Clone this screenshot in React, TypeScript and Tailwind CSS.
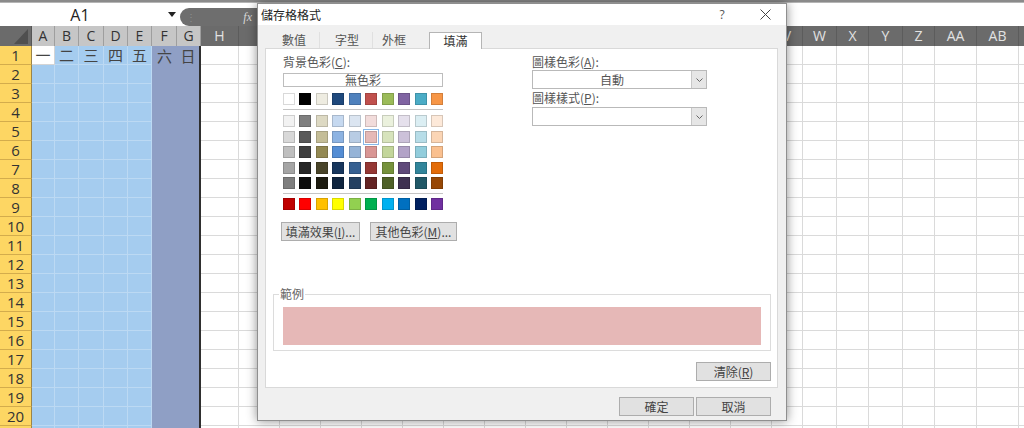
import React from "react";

type Col = { label: string; w: number };

// columns I..U sit under the dialog, so their headers are left blank
const COLS: Col[] = [
  { label: "A", w: 23 },
  { label: "B", w: 24 },
  { label: "C", w: 25 },
  { label: "D", w: 24 },
  { label: "E", w: 24 },
  { label: "F", w: 25 },
  { label: "G", w: 24 },
  { label: "H", w: 38 },
  ...Array.from({ length: 13 }, () => ({ label: "", w: 41 })),
  { label: "V", w: 31 },
  { label: "W", w: 34 },
  { label: "X", w: 32 },
  { label: "Y", w: 34 },
  { label: "Z", w: 32 },
  { label: "AA", w: 42 },
  { label: "AB", w: 42 },
  { label: "", w: 40 },
];

const WEEK = ["一", "二", "三", "四", "五", "六", "日"];

const THEME = ["#FFFFFF", "#000000", "#EEECE1", "#1F497D", "#4F81BD", "#C0504D", "#9BBB59", "#8064A2", "#4BACC6", "#F79646"];
const TINTS = [
  ["#F2F2F2", "#7F7F7F", "#DDD9C3", "#C6D9F0", "#DBE5F1", "#F2DCDB", "#EBF1DD", "#E5E0EC", "#DBEEF3", "#FDE9D9"],
  ["#D8D8D8", "#595959", "#C4BD97", "#8DB3E2", "#B8CCE4", "#E5B9B7", "#D7E3BC", "#CCC1D9", "#B7DDE8", "#FBD5B5"],
  ["#BFBFBF", "#3F3F3F", "#938953", "#548DD4", "#95B3D7", "#D99694", "#C3D69B", "#B2A2C7", "#92CDDC", "#FAC08F"],
  ["#A5A5A5", "#262626", "#494429", "#17365D", "#366092", "#953734", "#76923C", "#5F497A", "#31859B", "#E36C09"],
  ["#7F7F7F", "#0C0C0C", "#1D1B10", "#0F243E", "#244061", "#632423", "#4F6128", "#3F3151", "#205867", "#974806"],
];
const STANDARD = ["#C00000", "#FF0000", "#FFC000", "#FFFF00", "#92D050", "#00B050", "#00B0F0", "#0070C0", "#002060", "#7030A0"];

const cjk = "font-['Noto_Sans_CJK_TC','Noto_Sans',sans-serif]";
const latin = "font-['Open_Sans','Noto_Sans',sans-serif]";

function cellClass(row: number, col: number) {
  if (row === 1 && col === 0) return "bg-white border-r border-b border-[#d4d4d4]";
  if (col < 5) return "bg-[#a5ccef] border-r border-b border-[#bcd9f3]";
  if (col === 5) return "bg-[#8f9fc5]";
  if (col === 6) return "bg-[#8f9fc5] border-r-2 border-[#2f2f2f]";
  return "bg-white border-r border-b border-[#dadada]";
}

function Swatch({ color, selected }: { color: string; selected?: boolean }) {
  return (
    <div
      className={`w-[12px] h-[12px] border border-black/15 ${selected ? "outline outline-1 outline-offset-1 outline-[#86b8ea]" : ""}`}
      style={{ backgroundColor: color }}
    />
  );
}

function SwatchRow({ colors, selectedIndex }: { colors: string[]; selectedIndex?: number }) {
  return (
    <div className="flex justify-between w-[160px]">
      {colors.map((c, i) => (
        <Swatch key={i} color={c} selected={i === selectedIndex} />
      ))}
    </div>
  );
}

function Btn({ children, className = "" }: { children: React.ReactNode; className?: string }) {
  return (
    <div
      className={`h-[19px] flex items-center justify-center bg-[#e1e1e1] border border-[#adadad] text-[12px] leading-[14px] text-[#444] ${className}`}
    >
      {children}
    </div>
  );
}

function Select({ value }: { value?: string }) {
  return (
    <div className="w-[175px] h-[19px] flex bg-white border border-[#b9b9b9]">
      <div className="flex-1 flex items-center justify-center text-[12px] leading-[14px] text-[#555]">{value}</div>
      <div className="w-[15px] bg-[#e6e6e6] border-l border-[#c8c8c8] flex items-center justify-center">
        <svg width="7" height="4" viewBox="0 0 7 4">
          <polyline points="0.5,0.5 3.5,3.5 6.5,0.5" fill="none" stroke="#666" strokeWidth="1" />
        </svg>
      </div>
    </div>
  );
}

function Dialog() {
  return (
    <div
      className={`absolute left-[257px] top-[3px] w-[530px] h-[418px] bg-[#f0f0f0] border border-[#8f8f8f] shadow-[0_0_10px_rgba(0,0,0,0.45)] flex flex-col ${cjk}`}
    >
      {/* title bar */}
      <div className="h-[21px] bg-white flex items-center pl-[3px] pr-[15px]">
        <span className="text-[12px] leading-[14px] text-[#222]">儲存格格式</span>
        <span className={`ml-auto w-[12px] text-center text-[12px] leading-[14px] text-[#555] ${latin}`}>?</span>
        <svg className="ml-[32px]" width="11" height="11" viewBox="0 0 11 11">
          <path d="M0.5 0.5 L10.5 10.5 M10.5 0.5 L0.5 10.5" stroke="#444" strokeWidth="1" />
        </svg>
      </div>

      {/* tabs */}
      <div className="mt-[7px] ml-[5px] flex h-[16px] relative z-10 text-[12px] leading-[14px] text-[#555]">
        <div className="w-[57px] pl-[19px] flex items-center border-r border-[#e0e0e0]">數值</div>
        <div className="w-[53px] pl-[15px] flex items-center border-r border-[#e0e0e0]">字型</div>
        <div className="w-[55px] pl-[9px] flex items-center">外框</div>
        <div className="ml-[1px] w-[53px] h-[17px] flex items-center justify-center bg-white border border-b-0 border-[#b5b5b5] text-[#333]">
          填滿
        </div>
      </div>

      {/* panel */}
      <div className="ml-[7px] w-[513px] h-[340px] bg-white border border-[#d9d9d9] flex flex-col">
        <div className="flex pl-[17px] pt-[6px]">
          {/* left column */}
          <div className="w-[249px] flex flex-col text-[12px] leading-[14px] text-[#555]">
            <div>
              背景色彩(<span className="underline">C</span>):
            </div>
            <div className="mt-[4px] w-[160px] h-[14px] border border-[#bdbdbd] flex items-center justify-center text-[12px] text-[#555] leading-none">
              無色彩
            </div>
            <div className="mt-[6px]">
              <SwatchRow colors={THEME} />
            </div>
            <div className="mt-[4px] w-[160px] h-px bg-[#c4c4c4]" />
            <div className="mt-[5px] flex flex-col gap-[3.5px]">
              {TINTS.map((row, i) => (
                <SwatchRow key={i} colors={row} selectedIndex={i === 1 ? 5 : undefined} />
              ))}
            </div>
            <div className="mt-[4px] w-[160px] h-px bg-[#c4c4c4]" />
            <div className="mt-[4px]">
              <SwatchRow colors={STANDARD} />
            </div>
            <div className="mt-[12px] -ml-[2px] flex">
              <Btn className="w-[79px]">
                填滿效果(<span className="underline">I</span>)...
              </Btn>
              <Btn className="ml-[10px] w-[87px]">
                其他色彩(<span className="underline">M</span>)...
              </Btn>
            </div>
          </div>

          {/* right column */}
          <div className="flex flex-col text-[12px] leading-[14px] text-[#555]">
            <div>
              圖樣色彩(<span className="underline">A</span>):
            </div>
            <div className="mt-[1px]">
              <Select value="自動" />
            </div>
            <div className="mt-[2px]">
              圖樣樣式(<span className="underline">P</span>):
            </div>
            <div className="mt-[2px]">
              <Select />
            </div>
          </div>
        </div>

        {/* sample group */}
        <div className="mt-[53px] ml-[7px] w-[498px] h-[57px] border border-[#dcdcdc] relative pl-[9px] pt-[12px]">
          <span className="absolute -top-[8px] left-[5px] bg-white px-[1px] text-[12px] leading-[14px] text-[#666]">
            範例
          </span>
          <div className="w-[478px] h-[38px] bg-[#e6b8b7]" />
        </div>

        <div className="mt-[11px] flex justify-end pr-[6px]">
          <Btn className="w-[75px]">
            清除(<span className="underline">R</span>)
          </Btn>
        </div>
      </div>

      {/* footer */}
      <div className="mt-[9px] flex justify-end pr-[15px] gap-[2px]">
        <Btn className="w-[75px] border-[#0078d7]">確定</Btn>
        <Btn className="w-[75px]">取消</Btn>
      </div>
    </div>
  );
}

export default function App() {
  const rows = Array.from({ length: 21 }, (_, i) => i + 1);
  return (
    <div className="w-[1024px] h-[428px] overflow-hidden relative bg-white">
      {/* ribbon edge */}
      <div className="h-[3px] bg-[#8a8a8a] border-b border-[#b5b5b5]" />

      {/* name box + formula bar */}
      <div className="h-[23px] flex bg-white">
        <div className="w-[180px] shrink-0 flex items-center">
          <span className={`w-[160px] text-center text-[16px] leading-[20px] text-[#222] ${latin}`}>A1</span>
          <svg className="ml-[8px]" width="8" height="5" viewBox="0 0 8 5">
            <polygon points="0,0 8,0 4,5" fill="#222" />
          </svg>
        </div>
        <div className="w-[78px] h-[18px] self-end rounded-l-full bg-[#6e6e6e] flex items-center pl-[6px] pr-[6px]">
          <span className="text-[10px] text-[#8d8d8d] leading-none">⋮</span>
          <span className="ml-auto text-[12px] leading-[14px] italic text-[#d8d8d8] font-['Liberation_Serif',serif]">fx</span>
        </div>
      </div>

      {/* column headers */}
      <div className={`flex h-[20px] ${latin}`}>
        <div className="w-[32px] shrink-0 bg-[#6b6b6b] border-r border-[#555]">
          <svg width="31" height="20" viewBox="0 0 31 20">
            <polygon points="28,3 28,18 14,18" fill="#4f4f4f" />
          </svg>
        </div>
        {COLS.map((c, i) => (
          <div
            key={i}
            style={{ width: c.w }}
            className={`shrink-0 flex items-center justify-center text-[14px] leading-[18px] border-r ${
              i < 7
                ? "bg-[#c6c6c6] text-[#333] border-[#9e9e9e]"
                : "bg-[#6b6b6b] text-[#e2e2e2] border-[#5c5c5c]"
            }`}
          >
            {c.label}
          </div>
        ))}
      </div>

      {/* rows */}
      {rows.map((r) => (
        <div key={r} className="flex h-[19px]">
          <div
            className={`w-[32px] shrink-0 flex items-center justify-center bg-[#fdd663] border-r border-b border-r-[#9b8449] border-b-[#d3ac4c] text-[15px] leading-[18px] text-[#333] ${latin}`}
          >
            {r <= 20 ? r : null}
          </div>
          {COLS.map((c, i) => (
            <div
              key={i}
              style={{ width: c.w }}
              className={`shrink-0 flex items-center justify-center text-[15px] leading-[18px] text-[#444] ${cjk} ${cellClass(r, i)}`}
            >
              {r === 1 && i < 7 ? WEEK[i] : null}
            </div>
          ))}
        </div>
      ))}

      <Dialog />
    </div>
  );
}
